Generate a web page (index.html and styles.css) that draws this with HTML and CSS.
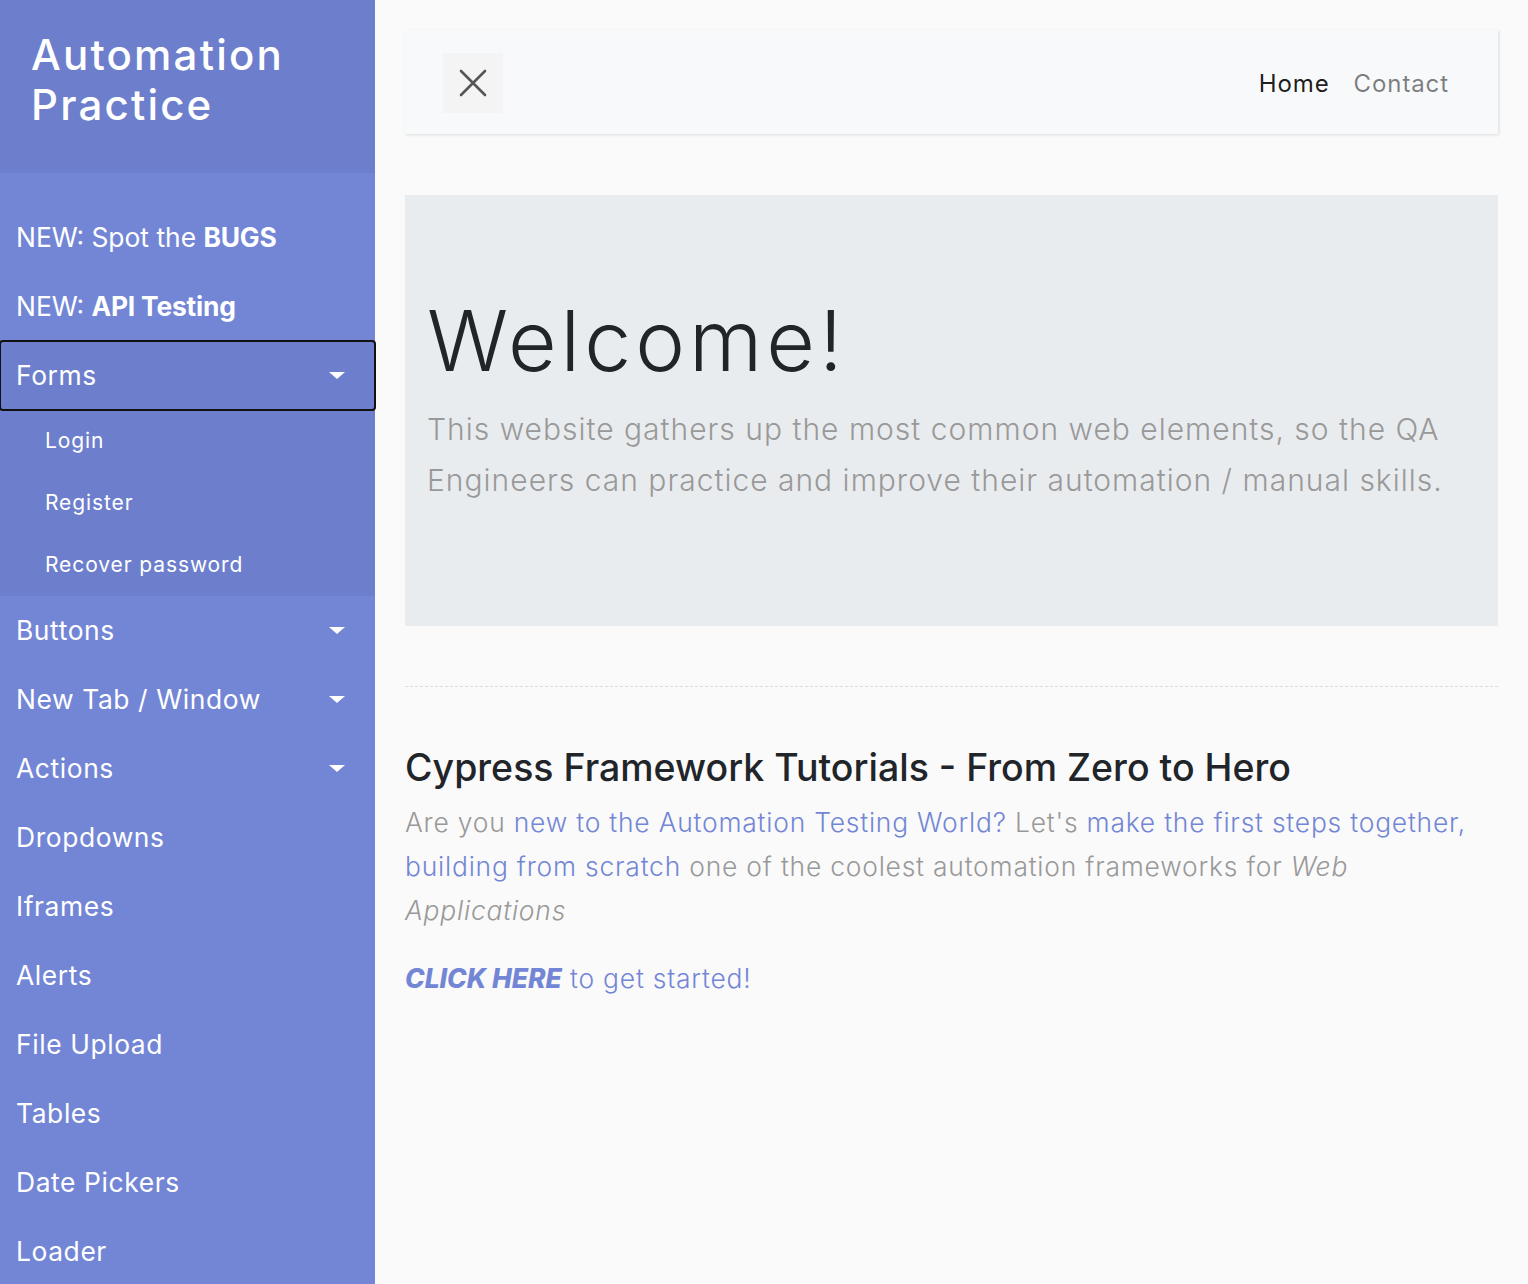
FILE: index.html
```html
<!DOCTYPE html>
<html lang="en">
<head>
<meta charset="utf-8">
<title>Automation Practice</title>
<link rel="stylesheet" href="styles.css">
</head>
<body>
<div class="wrapper">
  <nav class="sidebar">
    <div class="sidebar-header">
      <h3>Automation Practice</h3>
    </div>
    <ul class="components">
      <li><a href="#" class="news">NEW: Spot the <b>BUGS</b></a></li>
      <li><a href="#" class="news">NEW: <b>API Testing</b></a></li>
      <li class="open">
        <a href="#" class="toggle focused">Forms</a>
        <ul class="submenu">
          <li><a href="#">Login</a></li>
          <li><a href="#">Register</a></li>
          <li><a href="#">Recover password</a></li>
        </ul>
      </li>
      <li><a href="#" class="toggle">Buttons</a></li>
      <li><a href="#" class="toggle">New Tab / Window</a></li>
      <li><a href="#" class="toggle">Actions</a></li>
      <li><a href="#">Dropdowns</a></li>
      <li><a href="#">Iframes</a></li>
      <li><a href="#">Alerts</a></li>
      <li><a href="#">File Upload</a></li>
      <li><a href="#">Tables</a></li>
      <li><a href="#">Date Pickers</a></li>
      <li><a href="#">Loader</a></li>
    </ul>
  </nav>
  <main class="content">
    <div class="navbar">
      <button class="collapse-btn" type="button" aria-label="Close sidebar">
        <svg width="30" height="30" viewBox="0 0 30 30"><path d="M3 3 L27 27 M27 3 L3 27" stroke="#555" stroke-width="2.6" stroke-linecap="round" fill="none"/></svg>
      </button>
      <div class="nav-links">
        <a href="#" class="nav-link active">Home</a>
        <a href="#" class="nav-link">Contact</a>
      </div>
    </div>
    <div class="jumbotron">
      <h1 class="display">Welcome!</h1>
      <p class="lead">This website gathers up the most common web elements, so the QA Engineers can practice and improve their automation / manual skills.</p>
    </div>
    <div class="line"></div>
    <h3 class="section-title">Cypress Framework Tutorials - From Zero to Hero</h3>
    <p class="text">Are you <a href="#">new to the Automation Testing World?</a> Let's <a href="#">make the first steps together, building from scratch</a> one of the coolest automation frameworks for <i>Web Applications</i></p>
    <p class="text cta"><a href="#"><b><i>CLICK HERE</i></b> to get started!</a></p>
  </main>
</div>
</body>
</html>
```
FILE: styles.css
```css
* { box-sizing: border-box; }
html, body { margin: 0; padding: 0; }
body {
  font-family: "Inter", "Open Sans", sans-serif;
  background: #fafafa;
  color: #212529;
  font-size: 24px;
  line-height: 1.5;
}
a { text-decoration: none; color: inherit; }
.wrapper { display: flex; align-items: stretch; min-height: 100vh; }

.sidebar {
  width: 375px;
  flex: 0 0 375px;
  background: #7386d5;
  color: #fff;
  min-height: 1284px;
}
.sidebar-header {
  background: #6d7fcc;
  padding: 30px 30px 30px 31px;
}
.sidebar-header h3 {
  margin: 0 0 12px;
  font-size: 42px;
  line-height: 50.4px;
  font-weight: 500;
  letter-spacing: 2.2px;
}
.components {
  list-style: none;
  margin: 0;
  padding: 30px 0;
}
.components > li > a {
  display: block;
  position: relative;
  padding: 15px 16px;
  font-size: 26.4px;
  line-height: 39px;
  font-weight: 400;
  letter-spacing: 0.6px;
}
.components > li > a.news { letter-spacing: 0; }
.components b { font-weight: 700; letter-spacing: -0.2px; }
.components li.open > a { background: #6d7fcc; }
.focused {
  outline: 2px solid #111;
  outline-offset: -1px;
  border-radius: 3px;
}
.toggle::after {
  content: "";
  position: absolute;
  right: 30px;
  top: 50%;
  margin-top: -3px;
  border-top: 7px solid #fff;
  border-left: 8px solid transparent;
  border-right: 8px solid transparent;
}
.submenu {
  list-style: none;
  margin: 0;
  padding: 0;
  background: #6d7fcc;
}
.submenu a {
  display: block;
  padding: 15px 15px 15px 45px;
  font-size: 21px;
  line-height: 32px;
  letter-spacing: 0.9px;
}

.content {
  flex: 1;
  padding: 30px;
  min-width: 0;
}
.navbar {
  display: flex;
  align-items: center;
  justify-content: space-between;
  height: 104px;
  padding: 2px 37px 0 38px;
  background: #f8f9fa;
  box-shadow: 1px 1px 3px rgba(0,0,0,0.12);
  margin-bottom: 61px;
}
.collapse-btn {
  width: 60px;
  height: 60px;
  border: 0;
  padding: 0;
  background: #f4f4f4;
  display: flex;
  align-items: center;
  justify-content: center;
}
.nav-links { display: flex; padding-top: 2px; }
.nav-link {
  padding: 0 12px;
  font-size: 24px;
  letter-spacing: 0.9px;
  color: rgba(0,0,0,0.5);
}
.nav-link.active { color: rgba(0,0,0,0.9); }

.jumbotron {
  background: #e9ecef;
  padding: 96px 40px 96px 22px;
}
.display {
  margin: 0 0 12px;
  font-size: 84px;
  line-height: 100.8px;
  font-weight: 300;
  color: #212529;
  letter-spacing: 4px;
}
.lead {
  margin: 0 0 24px;
  font-size: 30px;
  line-height: 51px;
  font-weight: 300;
  color: #999;
  letter-spacing: 1px;
}
.line {
  border-bottom: 1px dashed #ddd;
  margin: 60px 0 56px;
}
.section-title {
  margin: 0 0 7px;
  font-size: 37.5px;
  line-height: 50px;
  font-weight: 500;
  color: #212529;
  letter-spacing: 0;
}
.text {
  margin: 0 0 24px;
  font-size: 26.4px;
  line-height: 44px;
  font-weight: 300;
  color: #999;
  letter-spacing: 0.8px;
}
.text a { color: #7386d5; }
.cta b { font-weight: 800; letter-spacing: 0; }
```
